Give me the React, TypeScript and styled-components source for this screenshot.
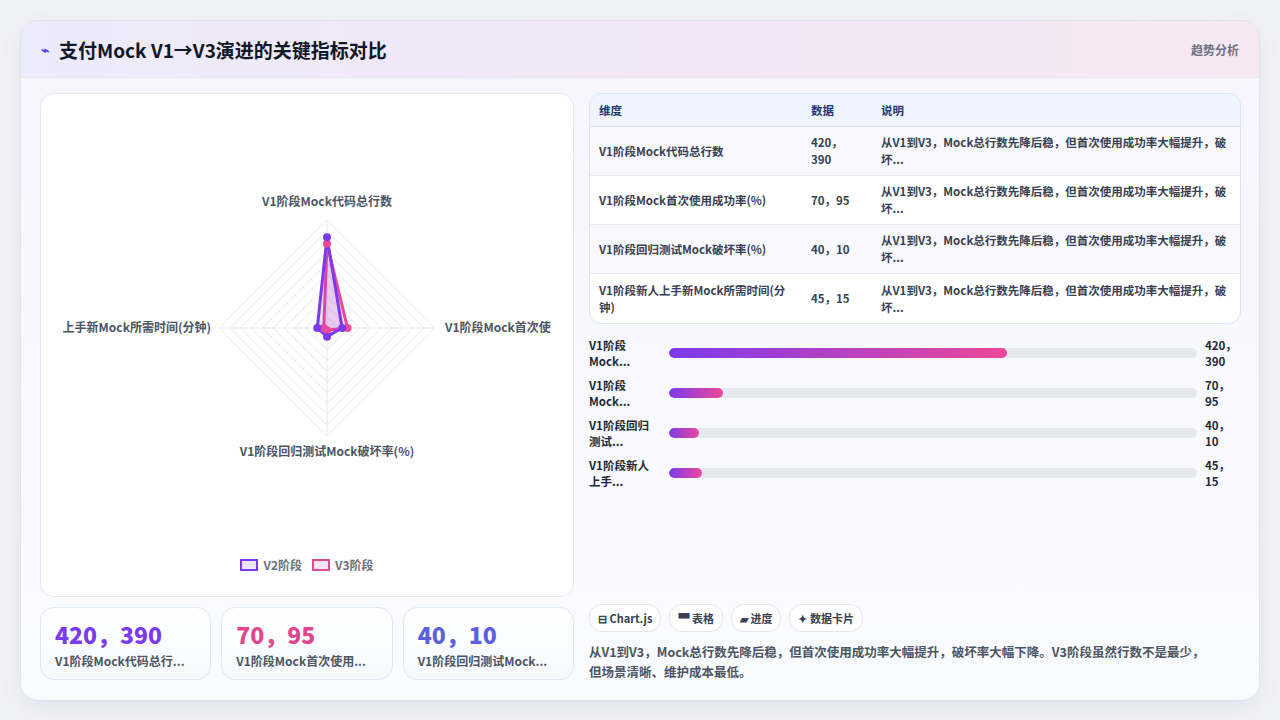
import React from 'react'
import styled, { createGlobalStyle } from 'styled-components'

const GlobalStyle = createGlobalStyle`
  html, body { margin: 0; padding: 0; background: #f1f2f6; }
  body { font-family: "Noto Sans CJK SC", "Noto Sans", sans-serif; }
`

const dims = [
  'V1阶段Mock代码总行数',
  'V1阶段Mock首次使用成功率(%)',
  'V1阶段回归测试Mock破坏率(%)',
  'V1阶段新人上手新Mock所需时间(分钟)',
]
const dataText = ['420，\u200b390', '70，95', '40，10', '45，15']
const desc = '从V1到V3，Mock总行数先降后稳，但首次使用成功率大幅提升，\u200b破坏...'
const bars = [
  { label: 'V1阶段Mock...', value: '420，390', pct: 64 },
  { label: 'V1阶段Mock...', value: '70，95', pct: 10.2 },
  { label: 'V1阶段回归测试...', value: '40，10', pct: 5.7 },
  { label: 'V1阶段新人上手...', value: '45，15', pct: 6.3 },
]

function Radar() {
  const cx = 286, cy = 234, R = 108, max = 500
  const pt = (i: number, v: number) => {
    const r = (v / max) * R
    const a = [[0, -1], [1, 0], [0, 1], [-1, 0]][i]
    return [cx + a[0] * r, cy + a[1] * r]
  }
  const poly = (vals: number[]) => vals.map((v, i) => pt(i, v).join(',')).join(' ')
  const v2 = [420, 70, 40, 45]
  const v3 = [390, 95, 10, 15]
  return (
    <svg width="533" height="440" viewBox="0 0 533 440">
      {Array.from({ length: 10 }, (_, k) => (
        <polygon key={k} points={poly([1, 1, 1, 1].map(() => ((k + 1) * max) / 10))} fill="none" stroke="#e5e9f0" strokeWidth="1" />
      ))}
      <line x1={cx} y1={cy - R} x2={cx} y2={cy + R} stroke="#e5e9f0" />
      <line x1={cx - R} y1={cy} x2={cx + R} y2={cy} stroke="#e5e9f0" />
      <polygon points={poly(v3)} fill="rgba(236,72,153,0.15)" stroke="#ec4899" strokeWidth="3" />
      <polygon points={poly(v2)} fill="rgba(124,58,237,0.15)" stroke="#7c3aed" strokeWidth="3" />
      {v3.map((v, i) => { const [x, y] = pt(i, v); return <circle key={'a' + i} cx={x} cy={y} r="4" fill="#ec4899" /> })}
      {v2.map((v, i) => { const [x, y] = pt(i, v); return <circle key={'b' + i} cx={x} cy={y} r="4" fill="#7c3aed" /> })}
      <g fontSize="12" fontWeight="700" fill="#4b5563" fontFamily='"Noto Sans CJK SC", sans-serif'>
        <text x={cx} y={cy - R - 14} textAnchor="middle">V1阶段Mock代码总行数</text>
        <text x={cx + R + 10} y={cy + 4}>V1阶段Mock首次使</text>
        <text x={cx} y={cy + R + 20} textAnchor="middle">V1阶段回归测试Mock破坏率(%)</text>
        <text x={cx - R - 8} y={cy + 4} textAnchor="end">上手新Mock所需时间(分钟)</text>
      </g>
    </svg>
  )
}

export default function App() {
  return (
    <>
      <GlobalStyle />
      <Page>
        <Card>
          <Header>
            <Title><Spark>⌁</Spark>支付Mock V1→V3演进的关键指标对比</Title>
            <HeaderTag>趋势分析</HeaderTag>
          </Header>
          <Body>
            <LeftCol>
              <ChartCard>
                <Radar />
                <Legend>
                  <LegendItem><Swatch color="#7c3aed" bg="#ede5fd" />V2阶段</LegendItem>
                  <LegendItem><Swatch color="#db4d94" bg="#fce4f0" />V3阶段</LegendItem>
                </Legend>
              </ChartCard>
              <Stats>
                <Stat><StatNum color="#7c3aed">420，390</StatNum><StatLabel>V1阶段Mock代码总行...</StatLabel></Stat>
                <Stat><StatNum color="#e0468e">70，95</StatNum><StatLabel>V1阶段Mock首次使用...</StatLabel></Stat>
                <Stat><StatNum color="#5b5fe0">40，10</StatNum><StatLabel>V1阶段回归测试Mock...</StatLabel></Stat>
              </Stats>
            </LeftCol>
            <RightCol>
              <Table>
                <colgroup>
                  <col style={{ width: 212 }} />
                  <col style={{ width: 70 }} />
                  <col />
                </colgroup>
                <thead>
                  <tr><Th>维度</Th><Th>数据</Th><Th>说明</Th></tr>
                </thead>
                <tbody>
                  {dims.map((d, i) => (
                    <Tr key={i}><Td>{d}</Td><Td>{dataText[i]}</Td><Td>{desc}</Td></Tr>
                  ))}
                </tbody>
              </Table>
              <Bars>
                {bars.map((b, i) => (
                  <BarRow key={i}>
                    <BarLabel>{b.label}</BarLabel>
                    <Track><Fill style={{ width: `${b.pct}%` }} /></Track>
                    <BarValue>{b.value}</BarValue>
                  </BarRow>
                ))}
              </Bars>
              <Spacer />
              <Tags>
                <Tag>⊟ Chart.js</Tag>
                <Tag>▀ 表格</Tag>
                <Tag>▰ 进度</Tag>
                <Tag>✦ 数据卡片</Tag>
              </Tags>
              <Summary>从V1到V3，Mock总行数先降后稳，但首次使用成功率大幅提升，破坏率大幅下降。V3阶段虽然行数不是最少，<br />但场景清晰、维护成本最低。</Summary>
            </RightCol>
          </Body>
        </Card>
      </Page>
    </>
  )
}

const Page = styled.div`
  width: 1280px;
  height: 720px;
  padding: 20px;
  box-sizing: border-box;
  background: #f1f2f6;
`
const Card = styled.div`
  height: 679px;
  background: linear-gradient(180deg, #f6f5fe 0%, #fafbff 100%);
  border: 1px solid #e1e0f0;
  border-radius: 18px;
  overflow: hidden;
  box-shadow: 0 8px 24px rgba(80, 70, 140, 0.08);
  display: flex;
  flex-direction: column;
`
const Header = styled.div`
  height: 56px;
  flex: none;
  display: flex;
  align-items: center;
  justify-content: space-between;
  padding: 0 20px;
  background: linear-gradient(90deg, #ecebfb 0%, #f3e6f6 60%, #f6e8f3 100%);
  border-bottom: 1px solid #e6e4f3;
`
const Title = styled.div`
  font-size: 19px;
  font-weight: 700;
  color: #111827;
  display: flex;
  align-items: center;
`
const Spark = styled.span`
  color: #4f46e5;
  font-size: 14px;
  margin-right: 10px;
`
const HeaderTag = styled.div`
  font-size: 12px;
  font-weight: 700;
  color: #6b7280;
`
const Body = styled.div`
  flex: 1;
  display: flex;
  gap: 15px;
  padding: 15px 18px 18px 19px;
`
const LeftCol = styled.div`
  width: 534px;
  display: flex;
  flex-direction: column;
  gap: 10px;
`
const ChartCard = styled.div`
  height: 504px;
  background: #fff;
  border: 1px solid #e3e8f2;
  border-radius: 14px;
  display: flex;
  flex-direction: column;
  align-items: center;
  overflow: hidden;
  box-sizing: border-box;
`
const Legend = styled.div`
  margin-top: 22px;
  display: flex;
  gap: 10px;
  font-size: 12px;
  font-weight: 600;
  color: #6b7280;
`
const LegendItem = styled.div`
  display: flex;
  align-items: center;
  gap: 5px;
`
const Swatch = styled.span<{ color: string; bg: string }>`
  width: 18px;
  height: 12px;
  border: 2px solid ${p => p.color};
  background: ${p => p.bg};
  box-sizing: border-box;
`
const Stats = styled.div`
  display: grid;
  grid-template-columns: repeat(3, 1fr);
  gap: 10px;
`
const Stat = styled.div`
  height: 73px;
  box-sizing: border-box;
  padding: 12px 14px;
  background: linear-gradient(180deg, #ffffff, #f6f9fd);
  border: 1px solid #dde7f5;
  border-radius: 14px;
`
const StatNum = styled.div<{ color: string }>`
  font-size: 23px;
  font-weight: 800;
  color: ${p => p.color};
  line-height: 28px;
`
const StatLabel = styled.div`
  margin-top: 4px;
  font-size: 12px;
  font-weight: 700;
  color: #4b5563;
`
const RightCol = styled.div`
  flex: 1;
  display: flex;
  flex-direction: column;
`
const Table = styled.table`
  width: 100%;
  table-layout: fixed;
  border-collapse: separate;
  border-spacing: 0;
  border: 1px solid #dbe3ef;
  border-radius: 12px;
  overflow: hidden;
  font-size: 11.5px;
  background: #fff;
`
const Th = styled.th`
  text-align: left;
  height: 32px;
  padding: 0 9px;
  background: #eef5ff;
  color: #1e3a6e;
  font-weight: 700;
  border-bottom: 1px solid #dbe3ef;
`
const Tr = styled.tr`
  &:nth-child(odd) { background: #f8f8fe; }
  &:not(:last-child) td { border-bottom: 1px solid #e6ebf3; }
`
const Td = styled.td`
  height: 49px;
  box-sizing: border-box;
  padding: 4px 9px;
  color: #374151;
  font-weight: 600;
  line-height: 17px;
  vertical-align: middle;
`
const Bars = styled.div`
  margin-top: 10px;
  display: flex;
  flex-direction: column;
  gap: 2px;
`
const BarRow = styled.div`
  display: flex;
  align-items: center;
  height: 38px;
`
const BarLabel = styled.div`
  width: 64px;
  font-size: 11.5px;
  font-weight: 700;
  color: #1f2937;
  line-height: 16px;
`
const Track = styled.div`
  margin-left: 16px;
  flex: 1;
  height: 10px;
  border-radius: 5px;
  background: #e5e8ef;
  overflow: hidden;
`
const Fill = styled.div`
  height: 100%;
  border-radius: 5px;
  background: linear-gradient(90deg, #7c3aed, #ec4899);
`
const BarValue = styled.div`
  width: 36px;
  margin-left: 8px;
  font-size: 11.5px;
  font-weight: 700;
  color: #1f2937;
  line-height: 16px;
`
const Spacer = styled.div`
  flex: 1;
`
const Tags = styled.div`
  display: flex;
  gap: 8px;
`
const Tag = styled.div`
  height: 26px;
  padding: 0 8px;
  display: flex;
  align-items: center;
  border: 1px solid #e3e6ee;
  border-radius: 13px;
  background: #fff;
  font-size: 11px;
  font-weight: 700;
  color: #374151;
`
const Summary = styled.div`
  margin-top: 10px;
  font-size: 12.5px;
  font-weight: 600;
  color: #4b5563;
  line-height: 20px;
  white-space: nowrap;
`
